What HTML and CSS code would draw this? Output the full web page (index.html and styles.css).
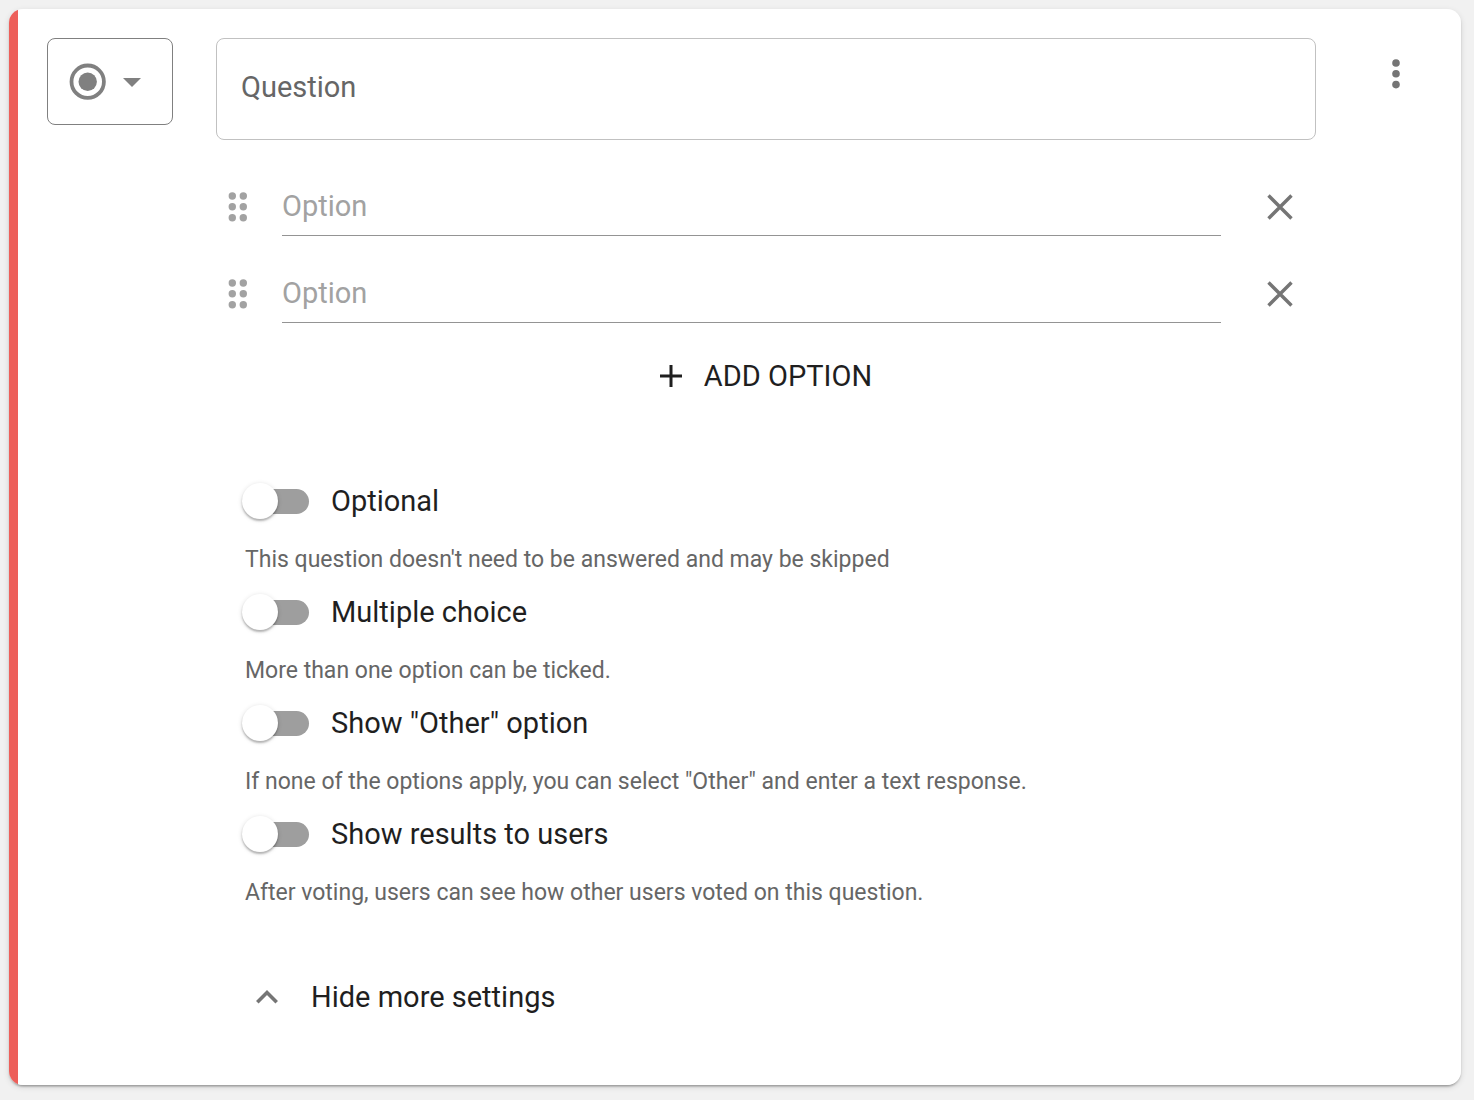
FILE: index.html
```html
<!DOCTYPE html>
<html lang="en">
<head>
<meta charset="utf-8">
<meta name="viewport" content="width=device-width, initial-scale=1">
<title>Question editor</title>
<link rel="stylesheet" href="styles.css">
</head>
<body>
<form class="card">
  <button class="type-button" type="button" aria-label="Question type: single choice">
    <svg width="38" height="38" viewBox="0 0 38 38" aria-hidden="true"><circle cx="18.7" cy="18.7" r="16.2" fill="none" stroke="currentColor" stroke-width="3.8"/><circle cx="18.7" cy="18.7" r="9.2" fill="currentColor"/></svg>
    <svg width="18" height="11" viewBox="0 0 18 11" aria-hidden="true"><path d="M0 2h18L9 11z" fill="currentColor"/></svg>
  </button>

  <div class="content">
    <textarea class="question" rows="1" placeholder="Question" aria-label="Question"></textarea>

    <ul class="options">
      <li class="option">
        <svg class="drag-handle" width="44" height="32" viewBox="0 0 44 32" aria-hidden="true"><g fill="currentColor"><circle cx="16.3" cy="5" r="3.7"/><circle cx="27.3" cy="5" r="3.7"/><circle cx="16.3" cy="15.8" r="3.7"/><circle cx="27.3" cy="15.8" r="3.7"/><circle cx="16.3" cy="26.7" r="3.7"/><circle cx="27.3" cy="26.7" r="3.7"/></g></svg>
        <input class="option-input" type="text" placeholder="Option" aria-label="Option 1">
        <button class="icon-button" type="button" aria-label="Remove option 1">
          <svg width="26" height="26" viewBox="0 0 26 26" aria-hidden="true"><path d="M1.5 1.5l23 23M24.5 1.5l-23 23" stroke="currentColor" stroke-width="3.4"/></svg>
        </button>
      </li>
      <li class="option">
        <svg class="drag-handle" width="44" height="32" viewBox="0 0 44 32" aria-hidden="true"><g fill="currentColor"><circle cx="16.3" cy="5" r="3.7"/><circle cx="27.3" cy="5" r="3.7"/><circle cx="16.3" cy="15.8" r="3.7"/><circle cx="27.3" cy="15.8" r="3.7"/><circle cx="16.3" cy="26.7" r="3.7"/><circle cx="27.3" cy="26.7" r="3.7"/></g></svg>
        <input class="option-input" type="text" placeholder="Option" aria-label="Option 2">
        <button class="icon-button" type="button" aria-label="Remove option 2">
          <svg width="26" height="26" viewBox="0 0 26 26" aria-hidden="true"><path d="M1.5 1.5l23 23M24.5 1.5l-23 23" stroke="currentColor" stroke-width="3.4"/></svg>
        </button>
      </li>
    </ul>

    <button class="add-option" type="button">
      <svg width="22" height="22" viewBox="0 0 22 22" aria-hidden="true"><path d="M11 0v22M0 11h22" stroke="currentColor" stroke-width="3"/></svg>
      ADD OPTION
    </button>

    <div class="settings">
      <div class="setting">
        <label class="setting-label"><input class="switch" type="checkbox" aria-describedby="hint-optional">Optional</label>
        <p class="hint" id="hint-optional">This question doesn't need to be answered and may be skipped</p>
      </div>
      <div class="setting">
        <label class="setting-label"><input class="switch" type="checkbox" aria-describedby="hint-multiple">Multiple choice</label>
        <p class="hint" id="hint-multiple">More than one option can be ticked.</p>
      </div>
      <div class="setting">
        <label class="setting-label"><input class="switch" type="checkbox" aria-describedby="hint-other">Show "Other" option</label>
        <p class="hint" id="hint-other">If none of the options apply, you can select "Other" and enter a text response.</p>
      </div>
      <div class="setting">
        <label class="setting-label"><input class="switch" type="checkbox" aria-describedby="hint-results">Show results to users</label>
        <p class="hint" id="hint-results">After voting, users can see how other users voted on this question.</p>
      </div>
    </div>

    <button class="toggle-settings" type="button" aria-expanded="true">
      <svg class="chevron" width="22" height="14" viewBox="0 0 22 14" aria-hidden="true"><path d="M1.3 12.3L11 2.6l9.7 9.7" fill="none" stroke="currentColor" stroke-width="3.6"/></svg>
      Hide more settings
    </button>
  </div>

  <button class="icon-button" type="button" aria-label="Question menu">
    <svg width="8" height="30" viewBox="0 0 8 30" aria-hidden="true"><g fill="currentColor"><circle cx="4" cy="4" r="3.8"/><circle cx="4" cy="14.8" r="3.8"/><circle cx="4" cy="25.6" r="3.8"/></g></svg>
  </button>
</form>
</body>
</html>
```
FILE: styles.css
```css
* {
  box-sizing: border-box;
}

body {
  margin: 0;
  padding: 9px 13px 14px 9px;
  background: #f1f1f1;
  color: #1f1f1f;
  font-family: Roboto, "Liberation Sans", sans-serif;
  font-size: 29px;
  line-height: 34px;
}

button,
input,
textarea {
  margin: 0;
  padding: 0;
  border: 0;
  background: none;
  color: inherit;
  font: inherit;
}

button {
  cursor: pointer;
}

svg {
  flex: none;
}

.card {
  display: grid;
  grid-template-columns: auto minmax(0, 1fr) auto;
  align-items: start;
  column-gap: 43px;
  padding: 29px 29px 66px 38px;
  border-radius: 14px;
  background: linear-gradient(to right, #ed5f5a 9px, #fff 9px);
  box-shadow: 0 4px 2px -3px rgba(0, 0, 0, 0.2), 0 2px 2px rgba(0, 0, 0, 0.14), 0 2px 6px rgba(0, 0, 0, 0.12);
}

.type-button {
  display: flex;
  align-items: center;
  gap: 16px;
  width: 126px;
  height: 87px;
  padding-left: 21px;
  border: 1px solid #808080;
  border-radius: 8px;
  color: #808080;
}

.content {
  display: flex;
  flex-direction: column;
}

.question {
  display: block;
  width: 100%;
  height: 102px;
  padding: 31px 24px;
  border: 1px solid #c1c1c1;
  border-radius: 8px;
  resize: none;
  overflow: hidden;
}

.question::placeholder {
  color: #666;
  opacity: 1;
}

.options {
  display: flex;
  flex-direction: column;
  gap: 25px;
  margin: 36px 0 0;
  padding: 0;
  list-style: none;
}

.option {
  display: flex;
  align-items: center;
  gap: 22px;
  height: 62px;
}

.drag-handle {
  color: #a2a2a2;
}

.option-input {
  flex: 1;
  align-self: flex-start;
  min-width: 0;
  height: 60px;
  border-bottom: 1px solid #949494;
}

.option-input::placeholder {
  color: #a2a2a2;
  opacity: 1;
}

.icon-button {
  display: flex;
  align-items: center;
  justify-content: center;
  width: 73px;
  height: 72px;
  border-radius: 50%;
  color: #757575;
}

.add-option {
  display: flex;
  align-items: center;
  align-self: center;
  gap: 22px;
  height: 66px;
  margin-top: 18px;
}

.settings {
  display: flex;
  flex-direction: column;
  gap: 18px;
  margin-top: 70px;
  padding-left: 26px;
}

.setting-label {
  display: flex;
  align-items: center;
  gap: 22px;
  width: fit-content;
  height: 44px;
}

.switch {
  display: flex;
  align-items: center;
  appearance: none;
  width: 64px;
  height: 25px;
  margin-left: 3px;
  border-radius: 13px;
  background: #9e9e9e;
}

.switch::before {
  content: "";
  width: 36px;
  height: 36px;
  margin-left: -3px;
  flex: none;
  border-radius: 50%;
  background: #fff;
  box-shadow: 0 2px 2px rgba(0, 0, 0, 0.24), 0 1px 5px rgba(0, 0, 0, 0.14);
}

.switch:checked {
  justify-content: flex-end;
  background: #f5a8a5;
}

.switch:checked::before {
  background: #ed5f5a;
}

.hint {
  margin: 25px 0 0 3px;
  color: #666;
  font-size: 23px;
  line-height: 24px;
}

.toggle-settings {
  display: flex;
  align-items: center;
  align-self: flex-start;
  gap: 33px;
  height: 44px;
  margin-top: 70px;
  padding-left: 40px;
}

.chevron {
  color: #757575;
}
```
